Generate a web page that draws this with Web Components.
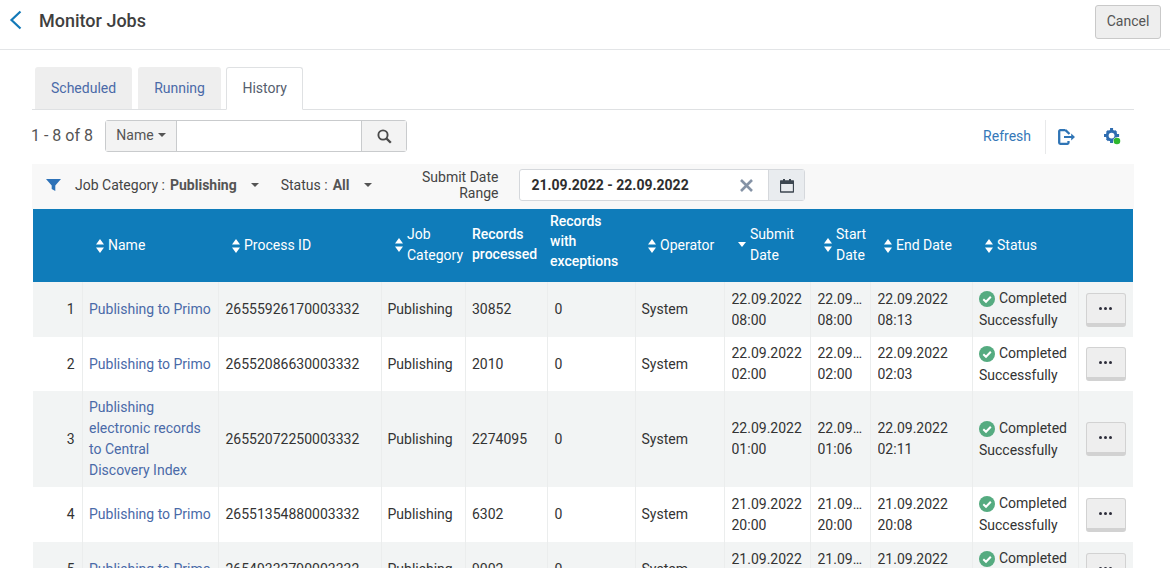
<!DOCTYPE html>
<html>
<head>
<meta charset="utf-8">
<title>Monitor Jobs</title>
<style>
  html, body { margin: 0; height: 100%; overflow: hidden; background: #fff; }
  body { font-family: Roboto, "Liberation Sans", sans-serif; font-size: 14px; color: #3a3a3a; }
  main { display: block; padding: 0 36px 0 32px; }
</style>
</head>
<body>
<page-header>Monitor Jobs</page-header>
<main>
  <job-tabs>
    <job-tab>Scheduled</job-tab>
    <job-tab>Running</job-tab>
    <job-tab active>History</job-tab>
  </job-tabs>
  <job-toolbar></job-toolbar>
  <job-filters></job-filters>
  <jobs-table></jobs-table>
</main>

<script>
// Page title bar
class PageHeader extends HTMLElement {
  constructor() {
    super();
    const shadow = this.attachShadow({ mode: 'open' });
    shadow.innerHTML = `
      <style>
        :host { display: flex; align-items: flex-start; height: 49px; border-bottom: 1px solid #e3e5e7; }
        svg { margin: 10px 0 0 8px; width: 15px; height: 20px; flex: none; }
        h1 { margin: 9px 0 0 16px; font-size: 18px; font-weight: 500; color: #3f3f3f; line-height: 24px; flex: 1; }
        button { margin: 5px 9px 0 0; width: 66px; height: 34px; border: 1px solid #c9c9c9; border-radius: 3px; background: #eee; font: 14px Roboto, sans-serif; color: #555; padding: 0 0 2px; }
      </style>
      <svg viewBox="0 0 15 20"><path d="M12.5 1.5 3.5 10l9 8.5" fill="none" stroke="#1279b8" stroke-width="2.2"/></svg>
      <h1><slot></slot></h1>
      <button>Cancel</button>`;
  }
}
customElements.define('page-header', PageHeader);

class JobTabs extends HTMLElement {
  constructor() {
    super();
    const shadow = this.attachShadow({ mode: 'open' });
    shadow.innerHTML = `
      <style>
        :host { display: flex; align-items: flex-start; gap: 6px; padding: 17px 0 0 3px; border-bottom: 1px solid #dfe1e3; height: 42px; }
      </style>
      <slot></slot>`;
  }
}
customElements.define('job-tabs', JobTabs);

class JobTab extends HTMLElement {
  constructor() {
    super();
    const shadow = this.attachShadow({ mode: 'open' });
    shadow.innerHTML = `
      <style>
        :host { display: block; height: 42px; line-height: 42px; padding: 0 16px; background: #eee; color: #4a6aa8; border-radius: 3px 3px 0 0; }
        :host([active]) { background: #fff; color: #555e6e; border: 1px solid #dfe1e3; border-bottom-color: #fff; height: 41px; line-height: 41px; padding: 0 15.5px; margin: 0 0 -1px -1px; }
      </style>
      <slot></slot>`;
  }
}
customElements.define('job-tab', JobTab);

// Result count, search box, refresh and export
class JobToolbar extends HTMLElement {
  constructor() {
    super();
    const shadow = this.attachShadow({ mode: 'open' });
    shadow.innerHTML = `
      <style>
        :host { display: flex; align-items: flex-start; height: 44px; padding-top: 10px; }
        .count { font-size: 16px; line-height: 32px; color: #555; width: 74px; white-space: nowrap; margin-left: -1px; flex: none; }
        .search { display: flex; height: 32px; border: 1px solid #c9cbcd; border-radius: 3px; box-sizing: border-box; }
        .name { width: 71px; background: #f3f3f3; border-right: 1px solid #c9cbcd; display: flex; align-items: center; justify-content: center; gap: 4px; color: #555; padding-bottom: 3px; box-sizing: border-box; }
        .caret { width: 0; height: 0; border: 4px solid transparent; border-top-color: #555; border-bottom: 0; }
        .field { width: 184px; }
        .go { width: 44px; background: #f3f3f3; border-left: 1px solid #c9cbcd; display: flex; align-items: center; justify-content: center; }
        .go svg { width: 15px; height: 15px; }
        .right { margin-left: auto; display: flex; align-items: center; height: 34px; padding-right: 13px; }
        .refresh { color: #3578b8; padding: 0 14px 2px 0; }
        .sep { width: 1px; height: 34px; background: #e8e9ea; margin-right: 12px; }
        .export { width: 17px; height: 16px; margin-right: 29px; }
        .gear { width: 17px; height: 17px; margin-top: -1px; }
      </style>
      <div class="count">1 - 8 of 8</div>
      <div class="search">
        <div class="name">Name <span class="caret"></span></div>
        <div class="field"></div>
        <div class="go"><svg viewBox="0 0 15 15"><circle cx="6" cy="6" r="4.6" fill="none" stroke="#4a4a4a" stroke-width="1.9"/><path d="m9.6 9.6 4.2 4.2" stroke="#4a4a4a" stroke-width="2.3"/></svg></div>
      </div>
      <div class="right">
        <span class="refresh">Refresh</span>
        <span class="sep"></span>
        <svg class="export" viewBox="0 0 17 16"><path d="M7.5 1.2H2.200a1 1 0 0 0-1 1v11.600a1 1 0 0 0 1 1h7.300a1 1 0 0 0 1-1v-1.800M7.500 1.200 11.500 5" fill="none" stroke="#2f74b5" stroke-width="2.300"/><path d="M6 7h7.200V4.500L17 8l-3.800 3.500V9H6z" fill="#2f74b5"/></svg>
        <svg class="gear" viewBox="0 0 18 18"><circle cx="8" cy="8" r="4.600" fill="none" stroke="#2f6db0" stroke-width="3"/><path d="M6.400 0h3.200v3H6.400zM6.400 13h3.200v3H6.400zM0 6.400h3v3.200H0zM13 6.400h3v3.200h-3zM2 4.200 4.200 2l2 2L4 6.200zM11.800 2 14 4.200l-2 2L9.800 4zM2 11.800 4.200 14l2-2L4 9.800z" fill="#2f6db0"/><circle cx="13.800" cy="13.800" r="4" fill="#fff"/><circle cx="13.700" cy="13.700" r="3.500" fill="#2eb82e"/></svg>
      </div>`;
  }
}
customElements.define('job-toolbar', JobToolbar);

class JobFilters extends HTMLElement {
  constructor() {
    super();
    const shadow = this.attachShadow({ mode: 'open' });
    shadow.innerHTML = `
      <style>
        :host { display: flex; align-items: center; height: 45px; box-sizing: border-box; padding-bottom: 3px; background: #f8f8f8; color: #444; }
        .funnel { width: 15px; height: 12px; margin: 0 14px; flex: none; }
        .f { white-space: nowrap; display: flex; align-items: center; }
        b { font-weight: 700; margin-left: 5px; color: #555; }
        .caret { width: 0; height: 0; border: 4.500px solid transparent; border-top-color: #555; border-bottom: 0; margin-left: 14px; }
        .status { margin-left: 22px; }
        .status b { margin-left: 5px; }
        .status .caret { margin-left: 15px; }
        .label { width: 78px; margin-left: 48px; text-align: right; line-height: 16px; flex: none; }
        .range { display: flex; width: 286px; height: 32px; margin-left: 21px; border: 1px solid #d5d8dc; border-radius: 3px; box-sizing: border-box; background: #fff; }
        .value { flex: 1; display: flex; align-items: center; padding-left: 11px; font-weight: 700; color: #2e2e2e; }
        .clear { width: 13px; height: 13px; margin-right: 15px; align-self: center; }
        .cal { width: 35px; background: #e9ecef; border-left: 1px solid #d5d8dc; display: flex; align-items: center; justify-content: center; }
        .cal svg { width: 14px; height: 15px; }
      </style>
      <svg class="funnel" viewBox="0 0 15 12"><path d="M0 0h15L9.300 6.500V12L5.700 10V6.500z" fill="#2d72b8"/></svg>
      <span class="f">Job Category : <b>Publishing</b><span class="caret"></span></span>
      <span class="f status">Status : <b>All</b><span class="caret"></span></span>
      <span class="label">Submit Date Range</span>
      <div class="range">
        <span class="value">21.09.2022 - 22.09.2022</span>
        <svg class="clear" viewBox="0 0 13 13"><path d="M1 1l11 11M12 1 1 12" stroke="#8593a6" stroke-width="2.600"/></svg>
        <span class="cal"><svg viewBox="0 0 14 15"><path d="M1 3h12a.6.6 0 0 1 .6.6V13a1 1 0 0 1-1 1H1.400a1 1 0 0 1-1-1V3.600A.6.6 0 0 1 1 3z" fill="none" stroke="#3c4650" stroke-width="1.500"/><path d="M.5 3h13v3H.5zM3 1h2v3H3zM9 1h2v3H9z" fill="#3c4650"/></svg></span>
      </div>`;
  }
}
customElements.define('job-filters', JobFilters);

class SortArrows extends HTMLElement {
  constructor() {
    super();
    const shadow = this.attachShadow({ mode: 'open' });
    shadow.innerHTML = `
      <style>
        :host { display: inline-flex; flex: none; width: 8px; height: 14px; }
        svg { width: 8px; height: 14px; display: block; }
      </style>
      <svg viewBox="0 0 8 14"><path d="M4 0l4 5.500H0zM4 14l4-5.500H0z" fill="#fff"/></svg>`;
  }
}
customElements.define('sort-arrows', SortArrows);

class StatusBadge extends HTMLElement {
  constructor() {
    super();
    const shadow = this.attachShadow({ mode: 'open' });
    shadow.innerHTML = `
      <style>
        :host { display: block; line-height: 22px; padding-bottom: 1px; }
        svg { width: 16px; height: 16px; vertical-align: -4px; margin-right: 4px; }
      </style>
      <svg viewBox="0 0 16 16"><circle cx="8" cy="8" r="8" fill="#55ab80"/><path d="M4.300 8.200 7 10.800l4.800-5" fill="none" stroke="#fff" stroke-width="2"/></svg><slot></slot>`;
  }
}
customElements.define('status-badge', StatusBadge);

const COLS = [49, 136, 163, 84, 82, 88, 89, 86, 60, 102, 106, 55];
const JOBS = [
  { h: 55, name: 'Publishing to Primo', id: '26555926170003332', rec: '30852', sub: ['22.09.2022', '08:00'], st: ['22.09.2022', '08:00'], end: ['22.09.2022', '08:13'] },
  { h: 54, name: 'Publishing to Primo', id: '26552086630003332', rec: '2010', sub: ['22.09.2022', '02:00'], st: ['22.09.2022', '02:00'], end: ['22.09.2022', '02:03'] },
  { h: 96, name: 'Publishing electronic records to Central Discovery Index', id: '26552072250003332', rec: '2274095', sub: ['22.09.2022', '01:00'], st: ['22.09.2022', '01:06'], end: ['22.09.2022', '02:11'] },
  { h: 55, name: 'Publishing to Primo', id: '26551354880003332', rec: '6302', sub: ['21.09.2022', '20:00'], st: ['21.09.2022', '20:00'], end: ['21.09.2022', '20:08'] },
  { h: 55, name: 'Publishing to Primo', id: '26549332790003332', rec: '9002', sub: ['21.09.2022', '14:00'], st: ['21.09.2022', '14:00'], end: ['21.09.2022', '14:07'] }
];

class JobsTable extends HTMLElement {
  constructor() {
    super();
    const shadow = this.attachShadow({ mode: 'open' });
    const head = (text, sort, cls = '') => `<th class="${cls}"><div class="th">${sort === 'desc' ? '<span class="desc"></span>' : sort ? '<sort-arrows></sort-arrows>' : ''}<span>${text}</span></div></th>`;
    const date = d => `<td><span class="trunc">${d[0]}</span><span class="trunc">${d[1]}</span></td>`;
    const rows = JOBS.map((j, i) => `
      <tr style="height:${j.h}px">
        <td class="num">${i + 1}</td>
        <td class="link">${j.name}</td>
        <td>${j.id}</td>
        <td class="near">Publishing</td>
        <td class="half">${j.rec}</td>
        <td>0</td>
        <td class="near">System</td>
        ${date(j.sub)}${date(j.st)}${date(j.end)}
        <td class="half"><status-badge>Completed Successfully</status-badge></td>
        <td class="act"><row-menu></row-menu></td>
      </tr>`).join('');
    shadow.innerHTML = `
      <style>
        :host { display: block; }
        table { border-collapse: collapse; table-layout: fixed; width: 1100px; margin-left: 1px; line-height: 21px; color: #333; }
        th { box-sizing: border-box; background: #0f7cba; color: #fff; font-weight: 400; text-align: left; height: 73px; padding: 0 0 0 14px; }
        th.tw { padding-bottom: 2px; }
        th.o { padding-left: 13px; }
        th.plain { font-weight: 500; line-height: 20px; padding: 0 0 3px 7px; }
        th.tight { padding: 0 0 10px 3px; }
        th.tight span { display: block; width: 72px; }
        .th { display: flex; align-items: center; gap: 4px; }
        .desc { width: 0; height: 0; border: 4px solid transparent; border-top: 5px solid #fff; border-bottom: 0; flex: none; }
        td { padding: 0 6px 0 7px; border-left: 1px solid #ebeded; vertical-align: middle; overflow: hidden; }
        td:first-child { border-left: 0; }
        tbody tr:nth-child(odd) td { background: #f2f4f4; }
        tbody tr:nth-child(even) td { background: #fff; }
        td.num { text-align: right; padding-right: 7px; }
        td.near { padding-left: 6px; }
        td.half, td.link { padding-left: 6.5px; }
        .link { color: #4a6aa8; }
        .trunc { display: block; white-space: nowrap; overflow: hidden; text-overflow: ellipsis; }
        td.act { padding: 0 0 0 7px; }
      </style>
      <table>
        <colgroup>${COLS.map(w => `<col style="width:${w}px">`).join('')}</colgroup>
        <thead><tr>
          ${head('')}${head('Name', 1)}${head('Process ID', 1)}${head('Job Category', 1, 'tw')}${head('Records processed', 0, 'plain')}${head('Records with exceptions', 0, 'plain tight')}${head('Operator', 1, 'o')}${head('Submit Date', 'desc', 'tw')}${head('Start Date', 1, 'tw')}${head('End Date', 1)}${head('Status', 1, 'o')}${head('')}
        </tr></thead>
        <tbody>${rows}</tbody>
      </table>`;
  }
}
customElements.define('jobs-table', JobsTable);

class RowMenu extends HTMLElement {
  constructor() {
    super();
    const shadow = this.attachShadow({ mode: 'open' });
    shadow.innerHTML = `
      <style>
        :host { display: flex; width: 40px; height: 34px; box-sizing: border-box; border: 1px solid #d2d2d2; border-bottom: 4px solid #d2d2d2; border-radius: 3px; background: #eee; align-items: center; justify-content: center; gap: 2px; }
        i { width: 3px; height: 3px; border-radius: 50%; background: #2c2c3a; }
      </style>
      <i></i><i></i><i></i>`;
  }
}
customElements.define('row-menu', RowMenu);
</script>
</body>
</html>
